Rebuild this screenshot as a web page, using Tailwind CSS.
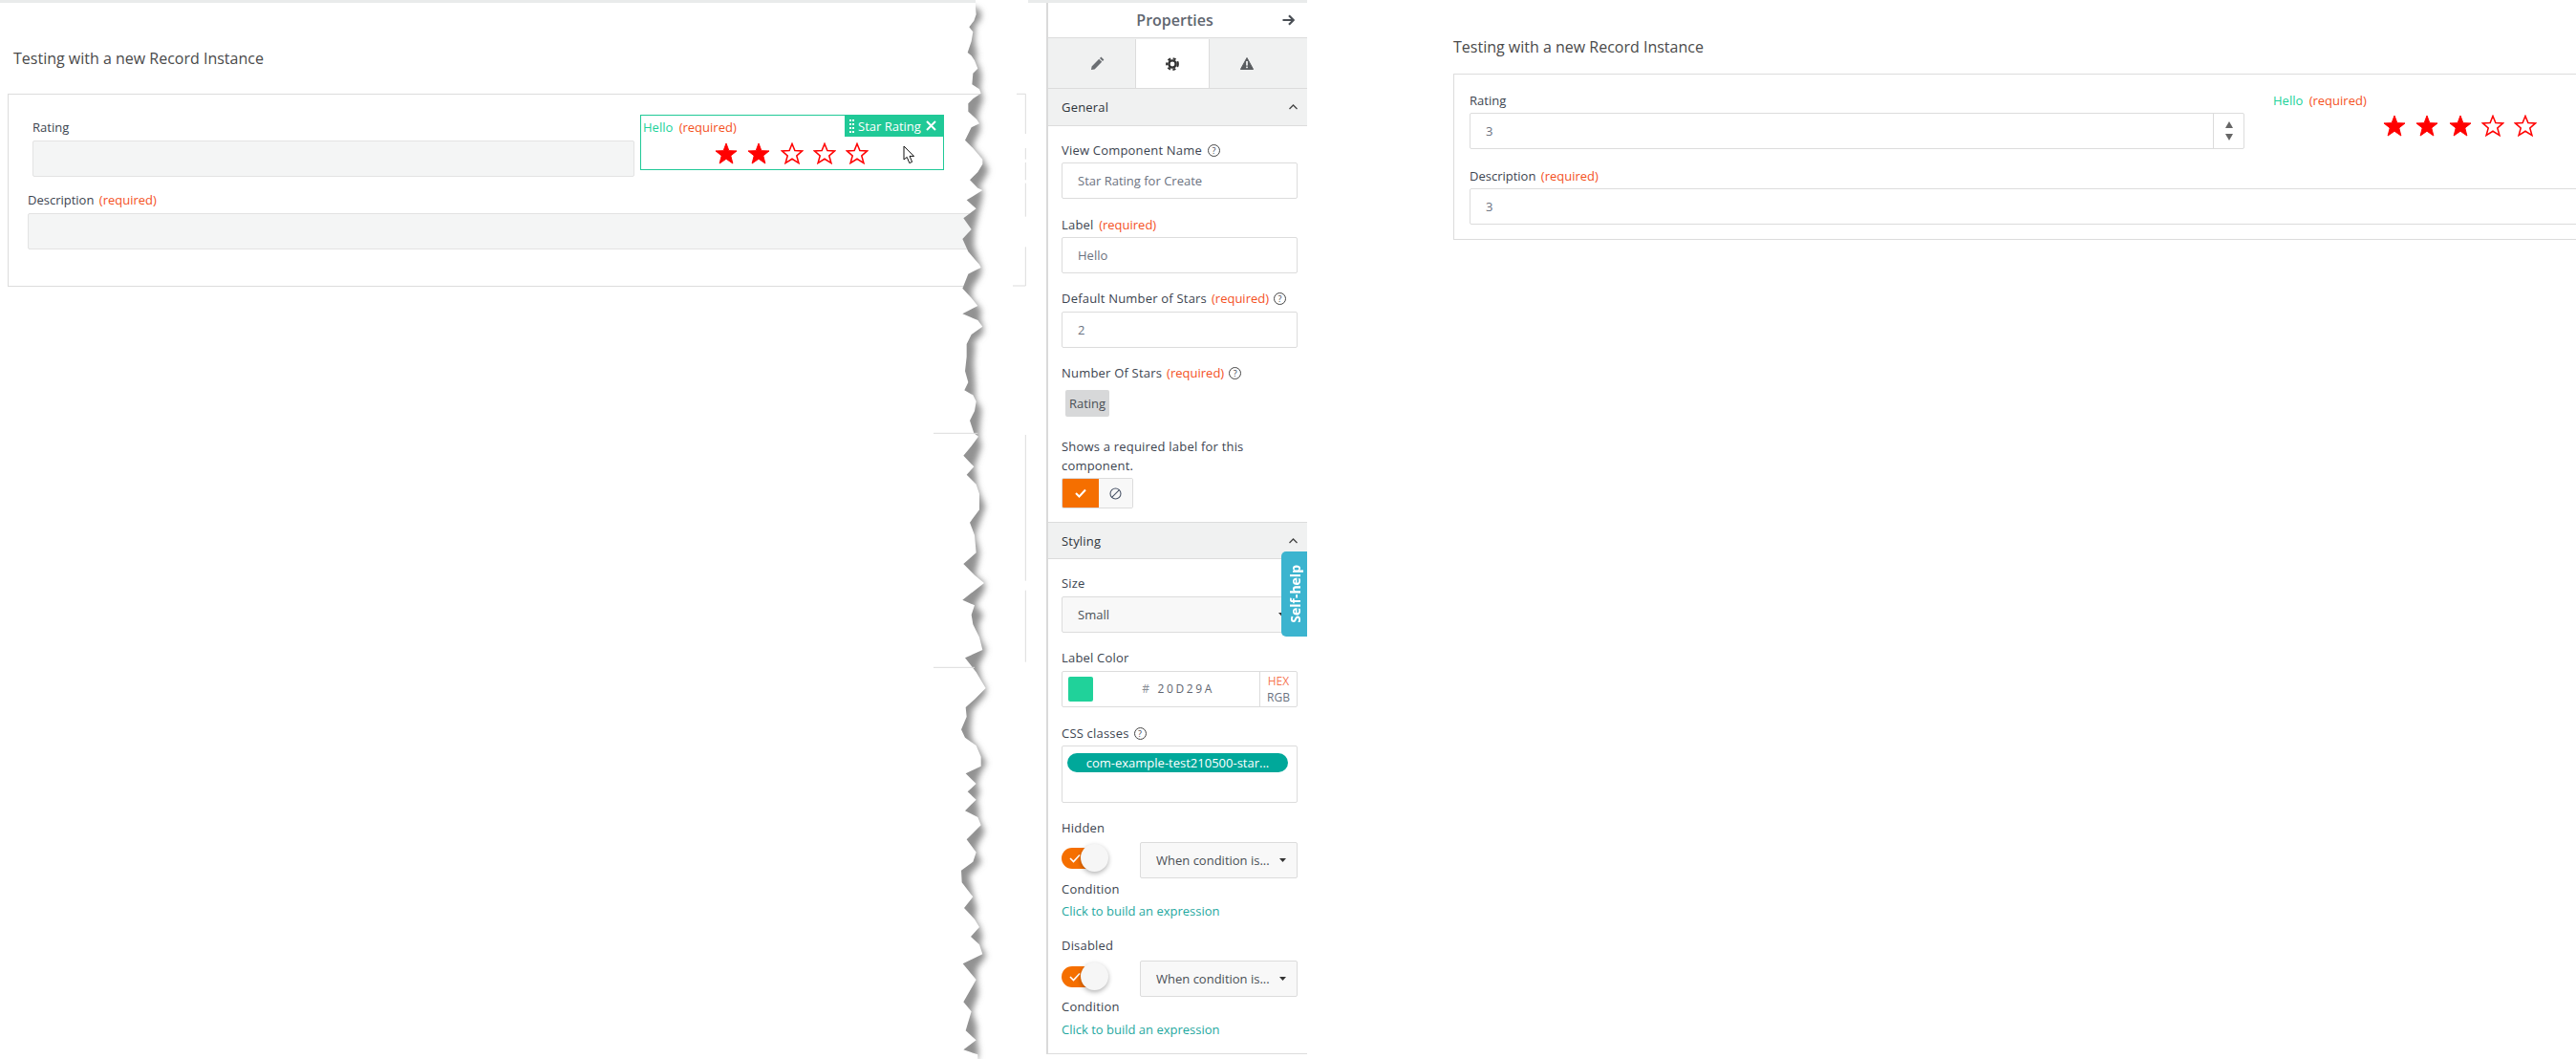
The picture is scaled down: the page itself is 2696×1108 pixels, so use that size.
<!DOCTYPE html>
<html lang="en">
<head>
    <meta charset="UTF-8">
    <title>Star Rating Component</title>
    <script src="https://cdn.jsdelivr.net/npm/@tailwindcss/browser@4"></script>
</head>
<body class="bg-white">
<div class="relative flex w-[2696px] h-[1108px] overflow-hidden bg-white font-['Open_Sans',sans-serif] text-[13px] leading-[20px] text-[#3c4450]">

    <!-- Designer canvas -->
    <div class="w-[1095px] shrink-0">
        <div class="h-[3px] bg-[#e9ebeb]"></div>
        <h2 class="mt-[47px] ml-[14px] text-[16px] leading-[22px] text-[#4a4a4a]">Testing with a new Record Instance</h2>
        <div class="mt-[26px] ml-[8px] w-[1065px] h-[202px] border border-[#dcdcdc]">
            <div class="flex items-start">
                <div class="ml-[25px] mt-[25px] w-[630px]">
                    <div class="font-medium leading-[18px]">Rating</div>
                    <div class="mt-[5px] h-[38px] rounded-[2px] border border-[#e3e3e3] bg-[#f4f5f5]"></div>
                </div>
                <!-- Selected component -->
                <div class="relative ml-[6px] mt-[21px] w-[318px] h-[58px] border border-[#20c997]">
                    <div class="pl-[2px] pt-[3px] leading-[18px]"><span class="text-[#20d29a]">Hello</span> <span class="ml-[3px] text-[#f4511e]">(required)</span></div>
                    <div class="mt-[7px] pl-[77px] flex gap-[10.25px]">
                        <svg class="w-[24px] h-[23px]" viewBox="0 0 24 24"><polygon points="12,1 15,9 23.5,9.3 17,14.5 19.2,23 12,18 4.8,23 7,14.5 0.5,9.3 9,9" fill="#ff0000" stroke="#ff0000"/></svg>
                        <svg class="w-[24px] h-[23px]" viewBox="0 0 24 24"><polygon points="12,1 15,9 23.5,9.3 17,14.5 19.2,23 12,18 4.8,23 7,14.5 0.5,9.3 9,9" fill="#ff0000" stroke="#ff0000"/></svg>
                        <svg class="w-[24px] h-[23px]" viewBox="0 0 24 24"><polygon points="12,1.5 15,9 23,9.3 17,14.5 19.2,22.5 12,18 4.8,22.5 7,14.5 1,9.3 9,9" fill="#fff" stroke="#ff0000" stroke-width="1.6"/></svg>
                        <svg class="w-[24px] h-[23px]" viewBox="0 0 24 24"><polygon points="12,1.5 15,9 23,9.3 17,14.5 19.2,22.5 12,18 4.8,22.5 7,14.5 1,9.3 9,9" fill="#fff" stroke="#ff0000" stroke-width="1.6"/></svg>
                        <svg class="w-[24px] h-[23px]" viewBox="0 0 24 24"><polygon points="12,1.5 15,9 23,9.3 17,14.5 19.2,22.5 12,18 4.8,22.5 7,14.5 1,9.3 9,9" fill="#fff" stroke="#ff0000" stroke-width="1.6"/></svg>
                    </div>
                    <div class="absolute -top-px -right-px w-[104px] h-[23px] bg-[#20c997] text-white flex items-center pl-[5px] gap-[4px] leading-[18px]">
                        <svg class="w-[5px] h-[14px]" viewBox="0 0 5 14" fill="#fff"><rect x="0" y="0" width="2" height="2"/><rect x="3" y="0" width="2" height="2"/><rect x="0" y="4" width="2" height="2"/><rect x="3" y="4" width="2" height="2"/><rect x="0" y="8" width="2" height="2"/><rect x="3" y="8" width="2" height="2"/><rect x="0" y="12" width="2" height="2"/><rect x="3" y="12" width="2" height="2"/></svg>
                        <span>Star Rating</span>
                        <svg class="ml-[1px] w-[11px] h-[11px]" viewBox="0 0 11 11" stroke="#fff" stroke-width="2"><path d="M1 1L10 10M10 1L1 10"/></svg>
                    </div>
                    <svg class="absolute left-[274px] top-[31px] w-[13px] h-[20px]" viewBox="0 0 13 20"><path d="M1 1V15L4.2 12.4L6.8 18.6L9.6 17.4L7 11.4H11.6Z" fill="#fff" stroke="#111" stroke-width="1"/></svg>
                </div>
            </div>
            <div class="ml-[20px] mt-[15px]">
                <div class="font-medium leading-[18px]">Description <span class="ml-[2px] font-normal text-[#f4511e]">(required)</span></div>
                <div class="mt-[5px] w-[1040px] h-[38px] rounded-[2px] border border-[#e3e3e3] bg-[#f4f5f5]"></div>
            </div>
        </div>
    </div>

    <!-- Properties panel -->
    <div class="relative w-[273px] shrink-0">
        <div class="h-[3px] bg-[#e9ebeb]"></div>
        <div class="border-l-2 border-[#dadada]">
            <div class="relative h-[36px] flex items-center justify-center pr-[6px] text-[16px] font-semibold text-[#5f6670]">
                Properties
                <svg class="absolute right-[13px] top-[12px] w-[13px] h-[12px]" viewBox="0 0 13 12" fill="none" stroke="#4a4f55" stroke-width="2.2"><path d="M0.5 6H11.5M7 1.2L11.8 6L7 10.8"/></svg>
            </div>
            <div class="flex h-[54px] pl-[13px] border-y border-[#dcdcdc] bg-[#f0f1f1]">
                <div class="w-[78px] flex items-center justify-center">
                    <svg class="w-[14px] h-[14px]" viewBox="0 0 14 14" fill="#6b6f73"><path d="M10.4 0.6L13.4 3.6L12 5L9 2ZM8.2 2.8L11.2 5.8L3.6 13.4L0 14L0.6 10.4Z"/></svg>
                </div>
                <div class="w-[78px] mt-px flex items-center justify-center bg-white border-x border-[#dcdcdc]">
                    <svg class="w-[14px] h-[14px]" viewBox="0 0 14 14" fill="none" stroke="#333"><circle cx="7" cy="7" r="3.6" stroke-width="2.4"/><circle cx="7" cy="7" r="5.8" stroke-width="2.2" stroke-dasharray="3 2.46"/></svg>
                </div>
                <div class="w-[78px] flex items-center justify-center">
                    <svg class="w-[14px] h-[13px]" viewBox="0 0 14 13"><path d="M7 0.5L13.6 12.5H0.4Z" fill="#5a5d60" stroke="#5a5d60" stroke-linejoin="round"/><rect x="6.2" y="4" width="1.6" height="4.6" fill="#fff"/><rect x="6.2" y="9.6" width="1.6" height="1.6" fill="#fff"/></svg>
                </div>
            </div>
            <div class="flex items-center justify-between h-[39px] pl-[14px] pr-[10px] border-b border-[#dcdcdc] bg-[#f0f1f1] font-medium tracking-[0.2px] text-[#2e343b]">
                General
                <svg class="w-[9px] h-[6px]" viewBox="0 0 9 6" fill="none" stroke="#444" stroke-width="1.3"><path d="M0.5 5L4.5 1L8.5 5"/></svg>
            </div>
            <div class="pl-[14px] pr-[10px] pt-[15px]">
                <div class="font-medium tracking-[0.2px] flex items-center gap-[6px]">View Component Name
                    <span class="w-[13px] h-[13px] rounded-full border border-[#444] flex items-center justify-center text-[9px] leading-none font-normal">?</span>
                </div>
                <div class="mt-[3px] h-[38px] w-[247px] flex items-center pl-[16px] rounded-[2px] border border-[#dcdcdc] text-[#6b7280]">Star Rating for Create</div>

                <div class="mt-[17px] font-medium tracking-[0.2px]">Label <span class="ml-[2px] font-normal tracking-normal text-[#f4511e]">(required)</span></div>
                <div class="mt-[3px] h-[38px] w-[247px] flex items-center pl-[16px] rounded-[2px] border border-[#dcdcdc] text-[#6b7280]">Hello</div>

                <div class="mt-[16px] font-medium tracking-[0.2px] flex items-center gap-[5px]"><span>Default Number of Stars</span> <span class="font-normal tracking-normal text-[#f4511e]">(required)</span>
                    <span class="w-[13px] h-[13px] rounded-full border border-[#444] flex items-center justify-center text-[9px] leading-none font-normal">?</span>
                </div>
                <div class="mt-[4px] h-[38px] w-[247px] flex items-center pl-[16px] rounded-[2px] border border-[#dcdcdc] text-[#6b7280]">2</div>

                <div class="mt-[16px] font-medium tracking-[0.2px] flex items-center gap-[5px]"><span>Number Of Stars</span> <span class="font-normal tracking-normal text-[#f4511e]">(required)</span>
                    <span class="w-[13px] h-[13px] rounded-full border border-[#444] flex items-center justify-center text-[9px] leading-none font-normal">?</span>
                </div>
                <div class="mt-[8px] ml-[4px] w-[46px] h-[28px] flex items-center justify-center rounded-[2px] bg-[#d7d8d9] text-[#4a4f55]">Rating</div>

                <div class="mt-[21px] w-[240px] font-medium tracking-[0.2px]">Shows a required label for this component.</div>
                <div class="mt-[3px] flex w-[75px] h-[32px] rounded-[2px] border border-[#dcdcdc] overflow-hidden">
                    <div class="w-[38px] bg-[#f56f00] flex items-center justify-center">
                        <svg class="w-[12px] h-[10px]" viewBox="0 0 12 10" fill="none" stroke="#fff" stroke-width="2"><path d="M1 5L4.5 8.5L11 1.5"/></svg>
                    </div>
                    <div class="flex-1 bg-[#f8f8f8] flex items-center justify-center">
                        <svg class="w-[13px] h-[13px]" viewBox="0 0 13 13" fill="none" stroke="#4a5568" stroke-width="1.1"><circle cx="6.5" cy="6.5" r="5.5"/><path d="M2.6 10.4L10.4 2.6"/></svg>
                    </div>
                </div>
            </div>
            <div class="mt-[14px] flex items-center justify-between h-[39px] pl-[14px] pr-[10px] border-y border-[#dcdcdc] bg-[#f0f1f1] font-medium tracking-[0.2px] text-[#2e343b]">
                Styling
                <svg class="w-[9px] h-[6px]" viewBox="0 0 9 6" fill="none" stroke="#444" stroke-width="1.3"><path d="M0.5 5L4.5 1L8.5 5"/></svg>
            </div>
            <div class="pl-[14px] pr-[10px] pt-[15px]">
                <div class="font-medium tracking-[0.2px]">Size</div>
                <div class="mt-[4px] h-[38px] w-[247px] flex items-center justify-between pl-[16px] pr-[12px] rounded-[2px] border border-[#dcdcdc] bg-[#f8f8f8] text-[#4a4f55]">
                    Small
                    <svg class="w-[7px] h-[4px]" viewBox="0 0 7 4" fill="#333"><path d="M0 0H7L3.5 4Z"/></svg>
                </div>

                <div class="mt-[16px] font-medium tracking-[0.2px]">Label Color</div>
                <div class="mt-[4px] h-[38px] w-[247px] flex rounded-[2px] border border-[#dcdcdc]">
                    <div class="ml-[6px] mt-[5px] w-[26px] h-[26px] rounded-[2px] bg-[#20d29a]"></div>
                    <div class="flex-1 flex items-center justify-center pl-[4px] text-[12px] tracking-[2.6px] text-[#5f6670]"><span class="text-[#8a8f96] mr-[6px]">#</span>20D29A</div>
                    <div class="w-[39px] border-l border-[#dcdcdc] flex flex-col items-center justify-center text-[12px] leading-[17px]">
                        <span class="text-[#f4511e]/80">HEX</span>
                        <span class="text-[#6b7280]">RGB</span>
                    </div>
                </div>

                <div class="mt-[17px] font-medium tracking-[0.2px] flex items-center gap-[5px]">CSS classes
                    <span class="w-[13px] h-[13px] rounded-full border border-[#444] flex items-center justify-center text-[9px] leading-none font-normal">?</span>
                </div>
                <div class="mt-[3px] h-[60px] w-[247px] rounded-[2px] border border-[#dcdcdc] pt-[7px] pl-[5px]">
                    <div class="w-[231px] h-[20px] rounded-full bg-[#00a89a] text-white font-medium flex items-center justify-center">com-example-test210500-star...</div>
                </div>

                <div class="mt-[16px] font-medium tracking-[0.2px]">Hidden</div>
                <div class="mt-[5px] flex items-start justify-between w-[247px]">
                    <div class="relative mt-[6px] w-[44px] h-[22px] rounded-full bg-[#f56f00] flex items-center pl-[8px]">
                        <svg class="w-[12px] h-[10px]" viewBox="0 0 12 10" fill="none" stroke="#fff" stroke-width="1.6"><path d="M1 5L4.5 8.5L11 1.5"/></svg>
                        <div class="absolute left-[20px] top-[-4px] w-[29px] h-[29px] rounded-full bg-[#f6f6f6] shadow-[0_2px_5px_rgba(0,0,0,0.3)]"></div>
                    </div>
                    <div class="w-[165px] h-[38px] flex items-center justify-between pl-[16px] pr-[11px] rounded-[2px] border border-[#dcdcdc] bg-[#f8f8f8] text-[#4a4f55]">
                        When condition is...
                        <svg class="w-[7px] h-[4px]" viewBox="0 0 7 4" fill="#333"><path d="M0 0H7L3.5 4Z"/></svg>
                    </div>
                </div>
                <div class="mt-[1px] font-medium tracking-[0.2px]">Condition</div>
                <div class="mt-[3px] text-[#1fa8a0]">Click to build an expression</div>

                <div class="mt-[16px] font-medium tracking-[0.2px]">Disabled</div>
                <div class="mt-[6px] flex items-start justify-between w-[247px]">
                    <div class="relative mt-[6px] w-[44px] h-[22px] rounded-full bg-[#f56f00] flex items-center pl-[8px]">
                        <svg class="w-[12px] h-[10px]" viewBox="0 0 12 10" fill="none" stroke="#fff" stroke-width="1.6"><path d="M1 5L4.5 8.5L11 1.5"/></svg>
                        <div class="absolute left-[20px] top-[-4px] w-[29px] h-[29px] rounded-full bg-[#f6f6f6] shadow-[0_2px_5px_rgba(0,0,0,0.3)]"></div>
                    </div>
                    <div class="w-[165px] h-[38px] flex items-center justify-between pl-[16px] pr-[11px] rounded-[2px] border border-[#dcdcdc] bg-[#f8f8f8] text-[#4a4f55]">
                        When condition is...
                        <svg class="w-[7px] h-[4px]" viewBox="0 0 7 4" fill="#333"><path d="M0 0H7L3.5 4Z"/></svg>
                    </div>
                </div>
                <div class="font-medium tracking-[0.2px]">Condition</div>
                <div class="mt-[4px] text-[#1fa8a0]">Click to build an expression</div>
            </div>
            <div class="mt-[15px] h-px bg-[#dcdcdc]"></div>
        </div>
        <!-- Self-help tab -->
        <div class="absolute right-0 top-[577px] w-[27px] h-[89px] rounded-l-[5px] bg-[#3cb4cf] text-white text-[14px] font-bold flex items-center justify-center pl-[3px]">
            <span class="[writing-mode:vertical-rl] rotate-180">Self-help</span>
        </div>
    </div>

    <!-- Running preview -->
    <div class="flex-1 pl-[153px]">
        <h2 class="mt-[38px] text-[16px] leading-[22px] text-[#4a4a4a]">Testing with a new Record Instance</h2>
        <div class="mt-[17px] h-[174px] w-[1300px] border border-[#dcdcdc]">
            <div class="flex pl-[16px] pt-[18px]">
                <div class="w-[811px]">
                    <div class="font-medium leading-[18px]">Rating</div>
                    <div class="mt-[4px] h-[38px] flex rounded-[2px] border border-[#dcdcdc] text-[#6b7280]">
                        <div class="flex-1 flex items-center pl-[16px]">3</div>
                        <div class="w-[32px] border-l border-[#dcdcdc] flex flex-col items-center justify-center gap-[6px]">
                            <svg class="w-[8px] h-[7px]" viewBox="0 0 8 7" fill="#666"><path d="M4 0L8 7H0Z"/></svg>
                            <svg class="w-[8px] h-[7px]" viewBox="0 0 8 7" fill="#666"><path d="M4 7L8 0H0Z"/></svg>
                        </div>
                    </div>
                </div>
                <div class="ml-[30px]">
                    <div class="leading-[18px]"><span class="text-[#20d29a]">Hello</span> <span class="ml-[3px] text-[#f4511e]">(required)</span></div>
                    <div class="mt-[6px] ml-[115px] flex gap-[10.25px]">
                        <svg class="w-[24px] h-[23px]" viewBox="0 0 24 24"><polygon points="12,1 15,9 23.5,9.3 17,14.5 19.2,23 12,18 4.8,23 7,14.5 0.5,9.3 9,9" fill="#ff0000" stroke="#ff0000"/></svg>
                        <svg class="w-[24px] h-[23px]" viewBox="0 0 24 24"><polygon points="12,1 15,9 23.5,9.3 17,14.5 19.2,23 12,18 4.8,23 7,14.5 0.5,9.3 9,9" fill="#ff0000" stroke="#ff0000"/></svg>
                        <svg class="w-[24px] h-[23px]" viewBox="0 0 24 24"><polygon points="12,1 15,9 23.5,9.3 17,14.5 19.2,23 12,18 4.8,23 7,14.5 0.5,9.3 9,9" fill="#ff0000" stroke="#ff0000"/></svg>
                        <svg class="w-[24px] h-[23px]" viewBox="0 0 24 24"><polygon points="12,1.5 15,9 23,9.3 17,14.5 19.2,22.5 12,18 4.8,22.5 7,14.5 1,9.3 9,9" fill="#fff" stroke="#ff0000" stroke-width="1.6"/></svg>
                        <svg class="w-[24px] h-[23px]" viewBox="0 0 24 24"><polygon points="12,1.5 15,9 23,9.3 17,14.5 19.2,22.5 12,18 4.8,22.5 7,14.5 1,9.3 9,9" fill="#fff" stroke="#ff0000" stroke-width="1.6"/></svg>
                    </div>
                </div>
            </div>
            <div class="pl-[16px] mt-[19px]">
                <div class="font-medium leading-[18px]">Description <span class="ml-[2px] font-normal text-[#f4511e]">(required)</span></div>
                <div class="mt-[4px] h-[38px] flex items-center pl-[16px] rounded-[2px] border border-[#dcdcdc] text-[#6b7280]">3</div>
            </div>
        </div>
    </div>

    <!-- Torn edge over the canvas, drawn in 1/3 px units -->
    <svg class="absolute left-[960px] top-0 w-[135px] h-[1108px]" viewBox="0 0 405 3324">
        <defs>
            <clipPath id="tearClip">
                <polygon points="183,0 183,25 185,45 178,65 163,85 175,100 170,130 158,165 170,175 180,190 190,215 175,230 172,265 195,280 200,293 175,310 160,325 160,350 187,375 195,388 170,400 150,440 175,465 205,500 205,515 190,540 165,565 190,590 205,597 155,628 185,655 145,685 170,720 142,750 160,790 195,830 200,840 160,860 142,905 170,935 190,960 142,985 190,1005 205,1025 170,1050 155,1080 155,1120 150,1165 160,1200 148,1225 175,1240 185,1260 180,1290 165,1320 178,1360 192,1370 170,1400 145,1430 178,1465 155,1490 185,1520 195,1550 195,1600 165,1640 180,1680 185,1735 145,1770 180,1805 210,1830 142,1883 180,1900 170,1930 175,1960 195,2000 205,2040 150,2065 185,2110 200,2135 215,2160 180,2195 152,2220 155,2250 138,2290 150,2315 185,2340 200,2375 200,2405 152,2428 185,2460 158,2485 185,2510 150,2545 190,2565 200,2590 155,2635 185,2675 175,2705 138,2732 140,2770 175,2815 147,2850 180,2885 195,2910 168,2940 195,2965 205,2995 143,3025 185,3075 145,3145 170,3175 152,3235 185,3265 145,3295 190,3310 190,3324 405,3324 405,0"/>
            </clipPath>
            <filter id="tearBlur" x="-50%" y="-2%" width="200%" height="104%">
                <feGaussianBlur stdDeviation="10"/>
            </filter>
        </defs>
        <polygon fill="#fff" points="183,0 183,25 185,45 178,65 163,85 175,100 170,130 158,165 170,175 180,190 190,215 175,230 172,265 195,280 200,293 175,310 160,325 160,350 187,375 195,388 170,400 150,440 175,465 205,500 205,515 190,540 165,565 190,590 205,597 155,628 185,655 145,685 170,720 142,750 160,790 195,830 200,840 160,860 142,905 170,935 190,960 142,985 190,1005 205,1025 170,1050 155,1080 155,1120 150,1165 160,1200 148,1225 175,1240 185,1260 180,1290 165,1320 178,1360 192,1370 170,1400 145,1430 178,1465 155,1490 185,1520 195,1550 195,1600 165,1640 180,1680 185,1735 145,1770 180,1805 210,1830 142,1883 180,1900 170,1930 175,1960 195,2000 205,2040 150,2065 185,2110 200,2135 215,2160 180,2195 152,2220 155,2250 138,2290 150,2315 185,2340 200,2375 200,2405 152,2428 185,2460 158,2485 185,2510 150,2545 190,2565 200,2590 155,2635 185,2675 175,2705 138,2732 140,2770 175,2815 147,2850 180,2885 195,2910 168,2940 195,2965 205,2995 143,3025 185,3075 145,3145 170,3175 152,3235 185,3265 145,3295 190,3310 190,3324 405,3324 405,0"/>
        <g clip-path="url(#tearClip)">
            <g filter="url(#tearBlur)">
                <polygon fill="#929292" transform="translate(8 0)" points="100,0 177,25 192,35 192,60 174,80 172,130 180,170 176,190 189,215 194,240 189,280 194,293 199,310 184,350 181,375 189,388 189,410 169,450 169,465 199,500 216,535 194,575 184,590 199,597 194,630 184,670 172,720 169,770 189,830 194,840 192,860 164,905 164,935 184,960 194,975 189,1000 199,1025 199,1045 164,1080 174,1080 169,1140 174,1210 174,1245 179,1260 194,1285 189,1330 186,1370 194,1400 179,1445 172,1465 177,1490 179,1520 189,1550 206,1590 184,1650 174,1680 189,1735 174,1805 204,1830 204,1850 174,1900 199,1930 184,1960 189,2000 209,2040 184,2090 194,2135 209,2160 206,2180 164,2230 159,2290 164,2325 179,2340 209,2395 189,2430 179,2460 189,2485 179,2510 186,2545 184,2565 204,2610 179,2655 179,2675 194,2705 154,2750 169,2815 179,2850 174,2885 189,2910 197,2940 189,2965 209,3000 179,3040 179,3075 184,3120 164,3175 179,3220 179,3265 184,3295 184,3324 100,3324"/>
            </g>
        </g>
        <!-- Bits of the canvas left beside the tear -->
        <rect x="348" y="0" width="57" height="9" fill="#e9ebeb"/>
        <path fill="none" stroke="#dcdcdc" stroke-width="3" d="M312 295H340V420M340 465V500M340 510V565M340 575V680M340 775V897H300M340 1365V1823M340 1853V2078"/>
        <path fill="none" stroke="#dcdcdc" stroke-width="3" d="M51 1360H190M51 2095H180"/>
    </svg>
</div>
</body>
</html>
